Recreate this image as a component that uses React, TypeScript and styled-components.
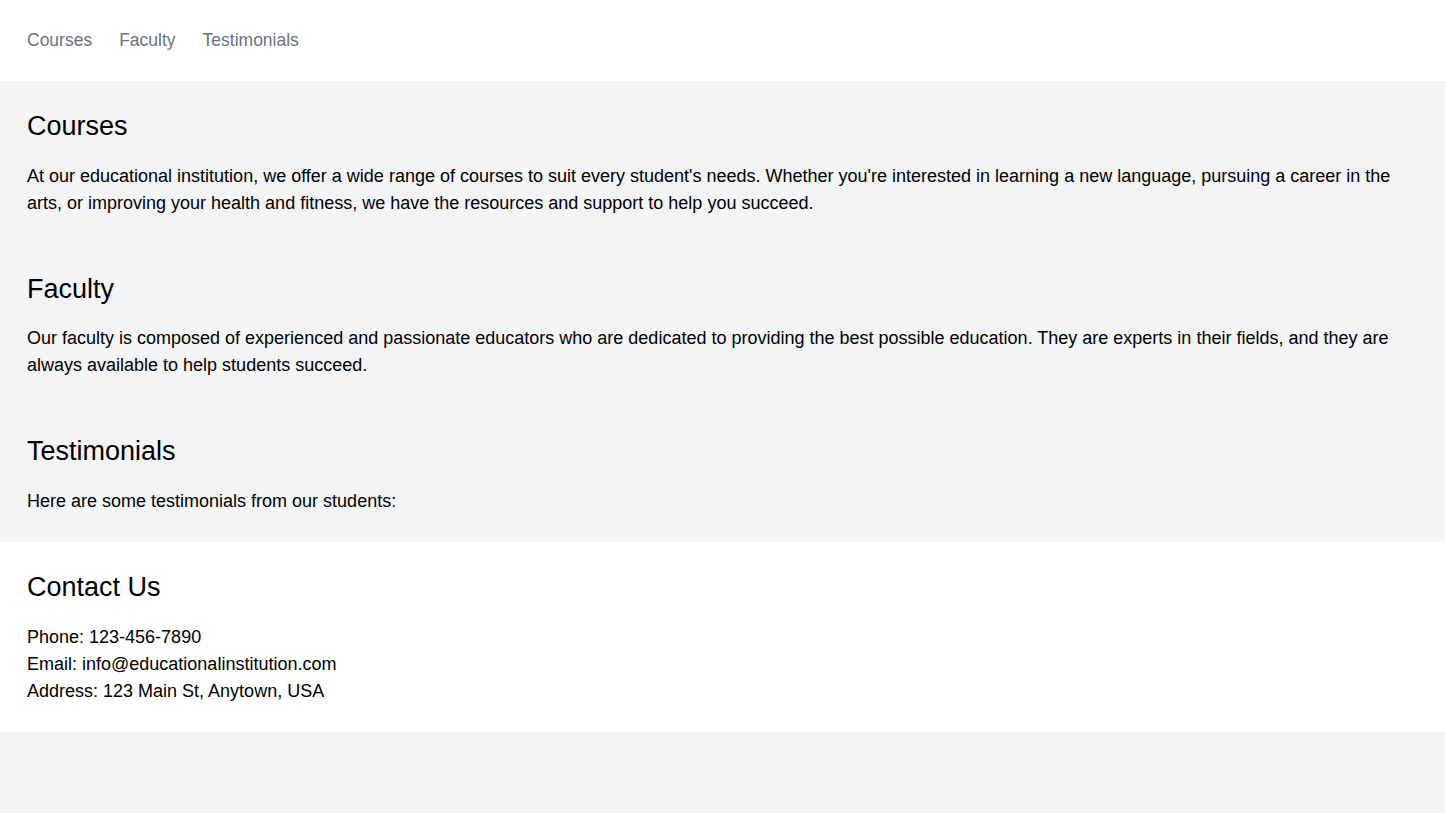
import React from 'react';
import styled, { createGlobalStyle } from 'styled-components';

const GlobalStyle = createGlobalStyle`
  html { font-size: 18px; }
  body {
    margin: 0;
    background-color: #f3f4f6;
    font-family: "Liberation Sans", Arial, sans-serif;
    color: #000;
    line-height: 1.5rem;
  }
  h2, p, ul { margin: 0; padding: 0; }
`;

const Nav = styled.nav`
  background-color: #fff;
  padding: 1.5rem;
`;

const NavList = styled.ul`
  display: flex;
  gap: 1.5rem;
  list-style: none;
`;

const NavLink = styled.a`
  color: #6b7280;
  text-decoration: none;
  font-size: 17.5px;
  line-height: 1.5rem;
`;

const Section = styled.section<{ $white?: boolean }>`
  padding: 1.5rem;
  background-color: ${props => (props.$white ? '#fff' : 'transparent')};
`;

const Heading = styled.h2`
  font-size: 1.5rem;
  line-height: 2.04rem;
  font-weight: 400;
  margin-bottom: 1rem;
`;

const Text = styled.p`
  font-size: 1rem;
  line-height: 1.5rem;
`;

const links = ['Courses', 'Faculty', 'Testimonials'];

const App = () => {
  return (
    <>
      <GlobalStyle />
      <Nav>
        <NavList>
          {links.map(link => (
            <li key={link}>
              <NavLink href={`#${link.toLowerCase()}`}>{link}</NavLink>
            </li>
          ))}
        </NavList>
      </Nav>
      <main>
        <Section id="courses">
          <Heading>Courses</Heading>
          <Text>
            At our educational institution, we offer a wide range of courses to suit every student's needs. Whether you're interested in learning a new language, pursuing a career in the arts, or improving your health and fitness, we have the resources and support to help you succeed.
          </Text>
        </Section>
        <Section id="faculty">
          <Heading>Faculty</Heading>
          <Text>
            Our faculty is composed of experienced and passionate educators who are dedicated to providing the best possible education. They are experts in their fields, and they are always available to help students succeed.
          </Text>
        </Section>
        <Section id="testimonials">
          <Heading>Testimonials</Heading>
          <Text>Here are some testimonials from our students:</Text>
        </Section>
        <Section id="contact" $white>
          <Heading>Contact Us</Heading>
          <Text>
            Phone: 123-456-7890
            <br />
            Email: info@educationalinstitution.com
            <br />
            Address: 123 Main St, Anytown, USA
          </Text>
        </Section>
      </main>
    </>
  );
};

export default App;
